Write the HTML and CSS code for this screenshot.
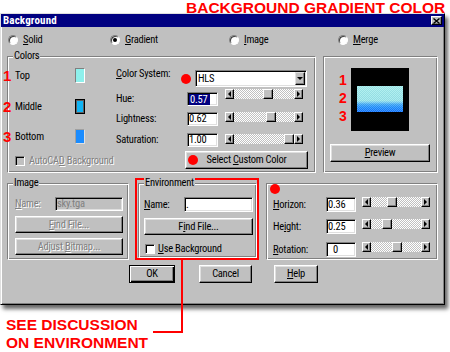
FILE: index.html
```html
<!DOCTYPE html>
<html>
<head>
<meta charset="utf-8">
<title>Background</title>
<link rel="stylesheet" href="styles.css">
</head>
<body>
<div class="headline">BACKGROUND GRADIENT COLOR</div>
<div class="dialog">
  <div class="titlebar">
    <span class="title">Background</span>
    <span class="close"><svg width="7" height="6" viewBox="0 0 7 6"><path d="M0.5 0.5L6.5 5.5M6.5 0.5L0.5 5.5" stroke="#000" stroke-width="1.4"/></svg></span>
  </div>
  <div class="radios">
    <div class="radio"><span class="rb"></span><span><u>S</u>olid</span></div>
    <div class="radio"><span class="rb on"></span><span><u>G</u>radient</span></div>
    <div class="radio"><span class="rb"></span><span><u>I</u>mage</span></div>
    <div class="radio"><span class="rb"></span><span><u>M</u>erge</span></div>
  </div>
  <div class="top">
    <div class="group colors">
      <span class="legend">Colors</span>
      <div class="col-left">
        <div class="crow r1"><span class="num">1</span><span class="clabel">Top</span><span class="swatch sw1"></span></div>
        <div class="crow r2"><span class="num">2</span><span class="clabel">Middle</span><span class="swatch sw2"></span></div>
        <div class="crow r3"><span class="num">3</span><span class="clabel">Bottom</span><span class="swatch sw3"></span></div>
        <div class="check disabled"><span class="cb"></span><span class="dtext">AutoCA<u>D</u> Background</span></div>
      </div>
      <div class="col-right">
        <div class="csrow"><span class="cslabel"><u>C</u>olor System:</span><span class="dot"></span><div class="combo"><span>HLS</span><span class="dd"><i></i></span></div></div>
        <div class="srow hue"><span class="slabel">Hue:</span><div class="field"><span class="sel">0.57</span></div><div class="slider"><span class="sbtn"><i class="al"></i></span><span class="track"><span class="thumb" style="margin-left:29px"></span></span><span class="sbtn"><i class="ar"></i></span></div></div>
        <div class="srow light"><span class="slabel">Lightness:</span><div class="field">0.62</div><div class="slider"><span class="sbtn"><i class="al"></i></span><span class="track"><span class="thumb" style="margin-left:32px"></span></span><span class="sbtn"><i class="ar"></i></span></div></div>
        <div class="srow sat"><span class="slabel">Saturation:</span><div class="field">1.00</div><div class="slider"><span class="sbtn"><i class="al"></i></span><span class="track"><span class="thumb" style="margin-left:50px"></span></span><span class="sbtn"><i class="ar"></i></span></div></div>
        <div class="btn custom"><span class="bdot"></span><span>Select <u>C</u>ustom Color</span></div>
      </div>
    </div>
    <div class="group preview">
      <div class="pv-row">
        <div class="pv-nums"><div>1</div><div>2</div><div>3</div></div>
        <div class="pv-box"><div class="pv-grad"></div></div>
      </div>
      <div class="btn pv-btn"><span><u>P</u>review</span></div>
    </div>
  </div>
  <div class="lower">
    <div class="group image">
      <span class="legend">Image</span>
      <div class="frow"><span class="flabel dtext"><u>N</u>ame:</span><div class="field dis wide-i">sky.tga</div></div>
      <div class="btn ibtn dtext"><span><u>F</u>ind File...</span></div>
      <div class="btn ibtn dtext"><span>Adjust <u>B</u>itmap...</span></div>
    </div>
    <div class="envwrap">
      <div class="group env">
        <span class="legend">Environment</span>
        <div class="frow erow"><span class="flabel"><u>N</u>ame:</span><div class="field wide-e">.</div></div>
        <div class="btn ebtn"><span>F<u>i</u>nd File...</span></div>
        <div class="check echeck"><span class="cb"></span><span><u>U</u>se Background</span></div>
      </div>
    </div>
    <div class="group horizon">
      <span class="rdot"></span>
      <div class="hrow h1"><span class="hlabel"><u>H</u>orizon:</span><div class="field hf">0.36</div><div class="slider hs"><span class="sbtn"><i class="al"></i></span><span class="track"><span class="thumb" style="margin-left:16px"></span></span><span class="sbtn"><i class="ar"></i></span></div></div>
      <div class="hrow h2"><span class="hlabel">He<u>i</u>ght:</span><div class="field hf">0.25</div><div class="slider hs"><span class="sbtn"><i class="al"></i></span><span class="track"><span class="thumb" style="margin-left:11px"></span></span><span class="sbtn"><i class="ar"></i></span></div></div>
      <div class="hrow h3"><span class="hlabel"><u>R</u>otation:</span><div class="field hf zero">0</div><div class="slider hs"><span class="sbtn"><i class="al"></i></span><span class="track"><span class="thumb" style="margin-left:21px"></span></span><span class="sbtn"><i class="ar"></i></span></div></div>
    </div>
  </div>
  <div class="buttons">
    <div class="btn default ok"><span>OK</span></div>
    <div class="btn cancel"><span>Cancel</span></div>
    <div class="btn help"><span><u>H</u>elp</span></div>
  </div>
</div>
<div class="callout">SEE DISCUSSION<br>ON ENVIRONMENT</div>
</body>
</html>
```
FILE: styles.css
```css
* { box-sizing: border-box; }
html, body { margin: 0; padding: 0; }
body {
  width: 450px; height: 352px; overflow: hidden; background: #fff; color: #000;
  font-family: "Roboto Condensed", "Liberation Sans Narrow", "DejaVu Sans Condensed", sans-serif;
  font-size: 10.5px; line-height: 12px; letter-spacing: -0.25px;
}
u { text-decoration: underline; text-underline-offset: 1px; }

.headline {
  height: 13px; padding-left: 186px; white-space: nowrap; letter-spacing: 0;
  font-family: "Liberation Sans", Arial, sans-serif; font-weight: bold;
  font-size: 15.5px; line-height: 15px; color: #f00;
}

.dialog {
  position: relative; width: 445px; height: 292px; background: #c0c0c0;
  border: 1px solid; border-color: #dfdfdf #000 #000 #dfdfdf;
  box-shadow: inset 1px 1px #fff, inset -1px -1px #808080, 3px 4px 4px rgba(0,0,0,.6);
}

.titlebar {
  height: 13px; background: #000080; display: flex; align-items: center;
  justify-content: space-between; padding: 0 2px;
}
.title { color: #fff; font-weight: bold; font-size: 11px; line-height: 13px; letter-spacing: 0.15px; }
.close {
  width: 11px; height: 9px; background: #c0c0c0; display: flex; align-items: center; justify-content: center;
  border: 1px solid; border-color: #fff #000 #000 #fff; box-shadow: inset -1px -1px #808080;
}

.radios {
  display: grid; grid-template-columns: 102px 119px 109px auto; align-items: center;
  height: 10px; margin-top: 7px; padding-left: 7px;
}
.radio { display: flex; align-items: center; gap: 5px; }
.rb {
  width: 10px; height: 10px; border-radius: 50%; background: #fff; flex: none;
  border: 1px solid; border-color: #808080 #fff #fff #808080;
  box-shadow: inset 1px 1px 0 #404040;
  display: flex; align-items: center; justify-content: center;
}
.rb.on::after { content: ""; width: 4px; height: 4px; border-radius: 50%; background: #000; }

.group {
  position: relative; border: 1px solid; border-color: #808080 #fff #fff #808080;
  box-shadow: inset 1px 1px #fff, inset -1px -1px #808080;
}
.legend { position: absolute; top: -7px; left: 5px; padding: 0 1px; background: #c0c0c0; white-space: nowrap; }

.top { display: flex; gap: 7px; margin-top: 12px; padding-left: 6px; }
.colors { width: 309px; height: 117px; display: flex; padding-left: 7px; }
.col-left { width: 101px; }
.col-right { width: 192px; }

.crow { position: relative; display: flex; align-items: center; height: 15px; }
.r1 { margin-top: 11px; }
.r2 { margin-top: 16px; }
.r3 { margin-top: 15px; }
.num {
  position: absolute; left: -12px; top: 0; color: #f00; letter-spacing: 0;
  font-family: "Liberation Sans", Arial, sans-serif; font-weight: bold; font-size: 15px; line-height: 15px;
}
.clabel { width: 60px; }
.swatch { width: 10px; height: 15px; border: 1px solid; border-color: #808080 #fff #fff #808080; }
.sw1 { background: #8ef0ec; }
.sw2 { background: #10b4f4; border-color: #000; box-shadow: inset 0 0 0 1px #606060; }
.sw3 { background: #1a8cff; border-color: #a0a0a0 #e0e0e0 #e0e0e0 #a0a0a0; }

.check { display: flex; align-items: center; gap: 4px; height: 11px; margin-top: 11px; white-space: nowrap; }
.cb {
  width: 10px; height: 10px; flex: none; background: #fff;
  border: 1px solid; border-color: #808080 #fff #fff #808080; box-shadow: inset 1px 1px #000;
}
.check.disabled .cb { background: #c0c0c0; }
.dtext, .disabled .dtext { color: #808080; text-shadow: 1px 1px 0 #fff; }

.csrow { display: flex; align-items: center; height: 17px; margin-top: 13px; }
.cslabel { width: 65px; align-self: flex-start; margin-top: -2px; white-space: nowrap; }
.dot { width: 10px; height: 10px; border-radius: 50%; background: #f00; flex: none; }
.combo {
  margin-left: 4px; width: 112px; height: 17px; background: #fff; display: flex; align-items: center;
  padding-left: 2px; border: 1px solid; border-color: #808080 #fff #fff #808080;
  box-shadow: inset 1px 1px #000, inset -1px -1px #dfdfdf;
}
.dd {
  margin-left: auto; margin-right: 1px; width: 10px; height: 13px; background: #c0c0c0;
  display: flex; align-items: center; justify-content: center;
  border: 1px solid; border-color: #dfdfdf #000 #000 #dfdfdf; box-shadow: inset -1px -1px #808080;
}
.dd i { width: 0; height: 0; border-style: solid; border-width: 3px 3px 0 3px; border-color: #000 transparent transparent transparent; }

.srow { display: flex; align-items: center; height: 14px; }
.hue { margin-top: 5px; }
.light { margin-top: 6px; }
.sat { margin-top: 7px; }
.slabel { width: 71px; white-space: nowrap; }
.field {
  height: 14px; width: 31px; background: #fff; display: flex; align-items: center; padding-left: 1px; flex: none;
  border: 1px solid; border-color: #808080 #fff #fff #808080;
  box-shadow: inset 1px 1px #000, inset -1px -1px #dfdfdf; white-space: nowrap; overflow: hidden;
}
.sel { background: #000080; color: #fff; padding: 0 3px 0 1px; line-height: 11px; }
.field.dis { background: #c0c0c0; color: #808080; }

.slider { display: flex; height: 10px; width: 78px; margin-left: 7px; align-self: flex-start; flex: none; }
.hue .slider { margin-top: -3px; }
.sat .slider { margin-top: 1px; }
.sbtn, .thumb {
  width: 9px; height: 10px; flex: none; background: #c0c0c0;
  border: 1px solid; border-color: #fff #000 #000 #fff; box-shadow: inset -1px -1px #808080;
  display: flex; align-items: center; justify-content: center;
}
.thumb { width: 10px; }
.track { flex: 1; display: flex; background: repeating-conic-gradient(#c0c0c0 0 25%, #fff 0 50%) 0 0 / 2px 2px; }
.al, .ar { width: 0; height: 0; border-style: solid; }
.al { border-width: 3px 3px 3px 0; border-color: transparent #000 transparent transparent; }
.ar { border-width: 3px 0 3px 3px; border-color: transparent transparent transparent #000; }

.btn {
  display: flex; align-items: center; justify-content: center; background: #c0c0c0; white-space: nowrap;
  border: 1px solid; border-color: #fff #000 #000 #fff;
  box-shadow: inset -1px -1px #808080, inset 1px 1px #dfdfdf;
}
.btn.default { border-color: #000; box-shadow: inset 1px 1px #fff, inset -1px -1px #000, inset -2px -2px #808080; }
.custom { position: relative; margin-top: 4px; margin-left: 69px; width: 123px; height: 18px; }
.bdot { position: absolute; left: 2px; top: 3px; width: 10px; height: 10px; border-radius: 50%; background: #f00; }

.preview { width: 115px; height: 117px; padding-left: 6px; }
.pv-row { display: flex; align-items: flex-start; }
.pv-nums {
  width: 12px; margin-left: 9px; margin-top: 14px; color: #f00; letter-spacing: 0;
  font-family: "Liberation Sans", Arial, sans-serif; font-weight: bold; font-size: 14px; line-height: 18px;
}
.pv-box { margin-top: 11px; width: 58px; height: 63px; background: #000; padding: 18px 6px 0 6px; }
.pv-grad {
  width: 46px; height: 26px;
  background:
    repeating-conic-gradient(rgba(255,255,255,.18) 0 25%, rgba(0,0,80,.06) 0 50%) 0 0 / 2px 2px,
    linear-gradient(to bottom, #a4f0ee 0%, #9ae8ec 56%, #7cd4f4 62%, #40aaf8 70%, #1e90ff 82%, #1478ff 100%);
}
.pv-btn { margin-top: 13px; width: 100px; height: 18px; }

.lower { display: flex; align-items: flex-start; margin-top: 5px; padding-left: 6px; }
.image { margin-top: 5px; width: 122px; height: 77px; padding-left: 7px; }
.frow { display: flex; align-items: center; height: 14px; margin-top: 13px; }
.flabel { width: 40px; white-space: nowrap; }
.wide-i { width: 68px; }
.ibtn { width: 108px; height: 17px; margin-top: 5px; }

.envwrap { position: relative; margin-left: 6px; width: 124px; height: 82px; border: 2px solid #f00; padding: 3px 0 0 1px; }
.envwrap::after { content: ""; position: absolute; left: 44px; top: calc(100% + 2px); width: 2px; height: 73px; background: #f00; }
.envwrap::before { content: ""; position: absolute; left: 16px; top: calc(100% + 73px); width: 30px; height: 2px; background: #f00; }
.env { width: 119px; height: 75px; padding-left: 5px; }
.erow { height: 15px; }
.wide-e { width: 69px; height: 15px; }
.ebtn { width: 109px; height: 17px; margin-top: 6px; }
.echeck { height: 10px; margin-top: 9px; padding-left: 1px; gap: 3px; }

.horizon { margin-left: 7px; margin-top: 5px; width: 172px; height: 77px; padding-left: 6px; }
.rdot { position: absolute; left: 3px; top: 0; width: 10px; height: 10px; border-radius: 50%; background: #f00; }
.hrow { display: flex; align-items: center; height: 15px; }
.h1 { margin-top: 13px; }
.h2 { margin-top: 7px; }
.h3 { margin-top: 8px; }
.hlabel { width: 53px; white-space: nowrap; }
.hf { width: 30px; height: 15px; }
.hf.zero { padding-left: 6px; }
.hs { width: 68px; margin-left: 6px; }

.buttons { display: flex; margin-top: 5px; padding-left: 128px; }
.ok { width: 46px; height: 18px; }
.cancel { width: 53px; height: 18px; margin-left: 24px; }
.help { width: 44px; height: 18px; margin-left: 22px; }

.callout {
  margin-top: 11px; padding-left: 6px; color: #f00; letter-spacing: 0;
  font-family: "Liberation Sans", Arial, sans-serif; font-weight: bold; font-size: 15.5px; line-height: 18px;
}
```
